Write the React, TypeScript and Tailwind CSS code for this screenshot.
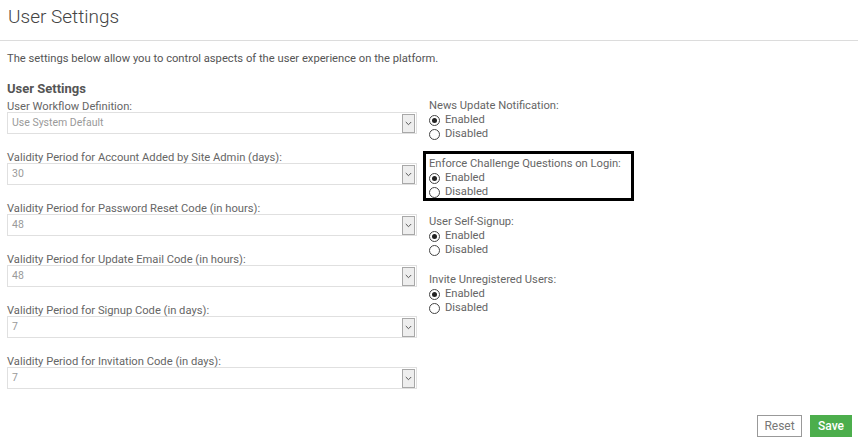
import React from 'react';

const selects = [
    {label: 'User Workflow Definition:', value: 'Use System Default'},
    {label: 'Validity Period for Account Added by Site Admin (days):', value: '30'},
    {label: 'Validity Period for Password Reset Code (in hours):', value: '48'},
    {label: 'Validity Period for Update Email Code (in hours):', value: '48'},
    {label: 'Validity Period for Signup Code (in days):', value: '7'},
    {label: 'Validity Period for Invitation Code (in days):', value: '7'},
];

const radios = [
    {label: 'News Update Notification:', boxed: false},
    {label: 'Enforce Challenge Questions on Login:', boxed: true},
    {label: 'User Self-Signup:', boxed: false},
    {label: 'Invite Unregistered Users:', boxed: false},
];

function Radio({checked, label}: {checked: boolean; label: string}) {
    return (
        <div className="flex items-center h-[14px]">
            <span className="w-[11px] h-[11px] rounded-full border border-[#444] bg-white flex items-center justify-center mr-[5px]">
                {checked && <span className="w-[5px] h-[5px] rounded-full bg-[#222]"/>}
            </span>
            <span>{label}</span>
        </div>
    );
}

function SelectBox({value}: {value: string}) {
    return (
        <div className="flex items-center h-[22px] border border-[#e0e0e0] bg-white pl-[4px] pr-[1px]">
            <span className="flex-1 text-[10.5px] text-[#9a9a9a]">{value}</span>
            <span className="w-[13px] h-[19px] border border-[#a8a8a8] bg-[#eeeeee] flex items-center justify-center">
                <svg width="7" height="5" viewBox="0 0 7 5">
                    <path d="M0.8 1 L3.5 3.7 L6.2 1" fill="none" stroke="#555" strokeWidth="1"/>
                </svg>
            </span>
        </div>
    );
}

export default function App() {
    return (
        <div className="w-[858px] h-[438px] bg-white text-[#666] font-['Roboto',sans-serif] text-[11.2px] leading-[14px]">
            <div className="h-[41px] border-b border-[#dcdcdc] pl-[8px] pt-[5px]">
                <h1 className="text-[19px] leading-[24px] font-light text-[#444]">User Settings</h1>
            </div>
            <div className="px-[7px]">
                <p className="mt-[11px] text-[#555]">The settings below allow you to control aspects of the user experience on the platform.</p>
                <h2 className="mt-[15px] text-[13px] leading-[16px] font-bold text-[#555]">User Settings</h2>
                <div className="flex mt-[1px]">
                    <div className="w-[410px] flex flex-col gap-[15px]">
                        {selects.map((s) => (
                            <div key={s.label}>
                                <div className="h-[14px] leading-[18px]">{s.label}</div>
                                <SelectBox value={s.value}/>
                            </div>
                        ))}
                    </div>
                    <div className="ml-[12px] mt-[1px] flex flex-col gap-[16px]">
                        {radios.map((r) => (
                            <div key={r.label} className="relative">
                                <div>{r.label}</div>
                                <Radio checked label="Enabled"/>
                                <Radio checked={false} label="Disabled"/>
                                {r.boxed && (
                                    <div className="absolute left-[-6px] top-[-6px] w-[211px] h-[50px] border-[3px] border-black"/>
                                )}
                            </div>
                        ))}
                    </div>
                </div>
                <div className="flex justify-end gap-[8px] mt-[26px] -mr-[1px]">
                    <button type="button" className="w-[45px] h-[22px] border border-[#999] bg-white text-[#777] text-[12px]">Reset</button>
                    <button type="button" className="w-[42px] h-[22px] bg-[#4cae4c] text-white font-medium text-[12px]">Save</button>
                </div>
            </div>
        </div>
    );
}
